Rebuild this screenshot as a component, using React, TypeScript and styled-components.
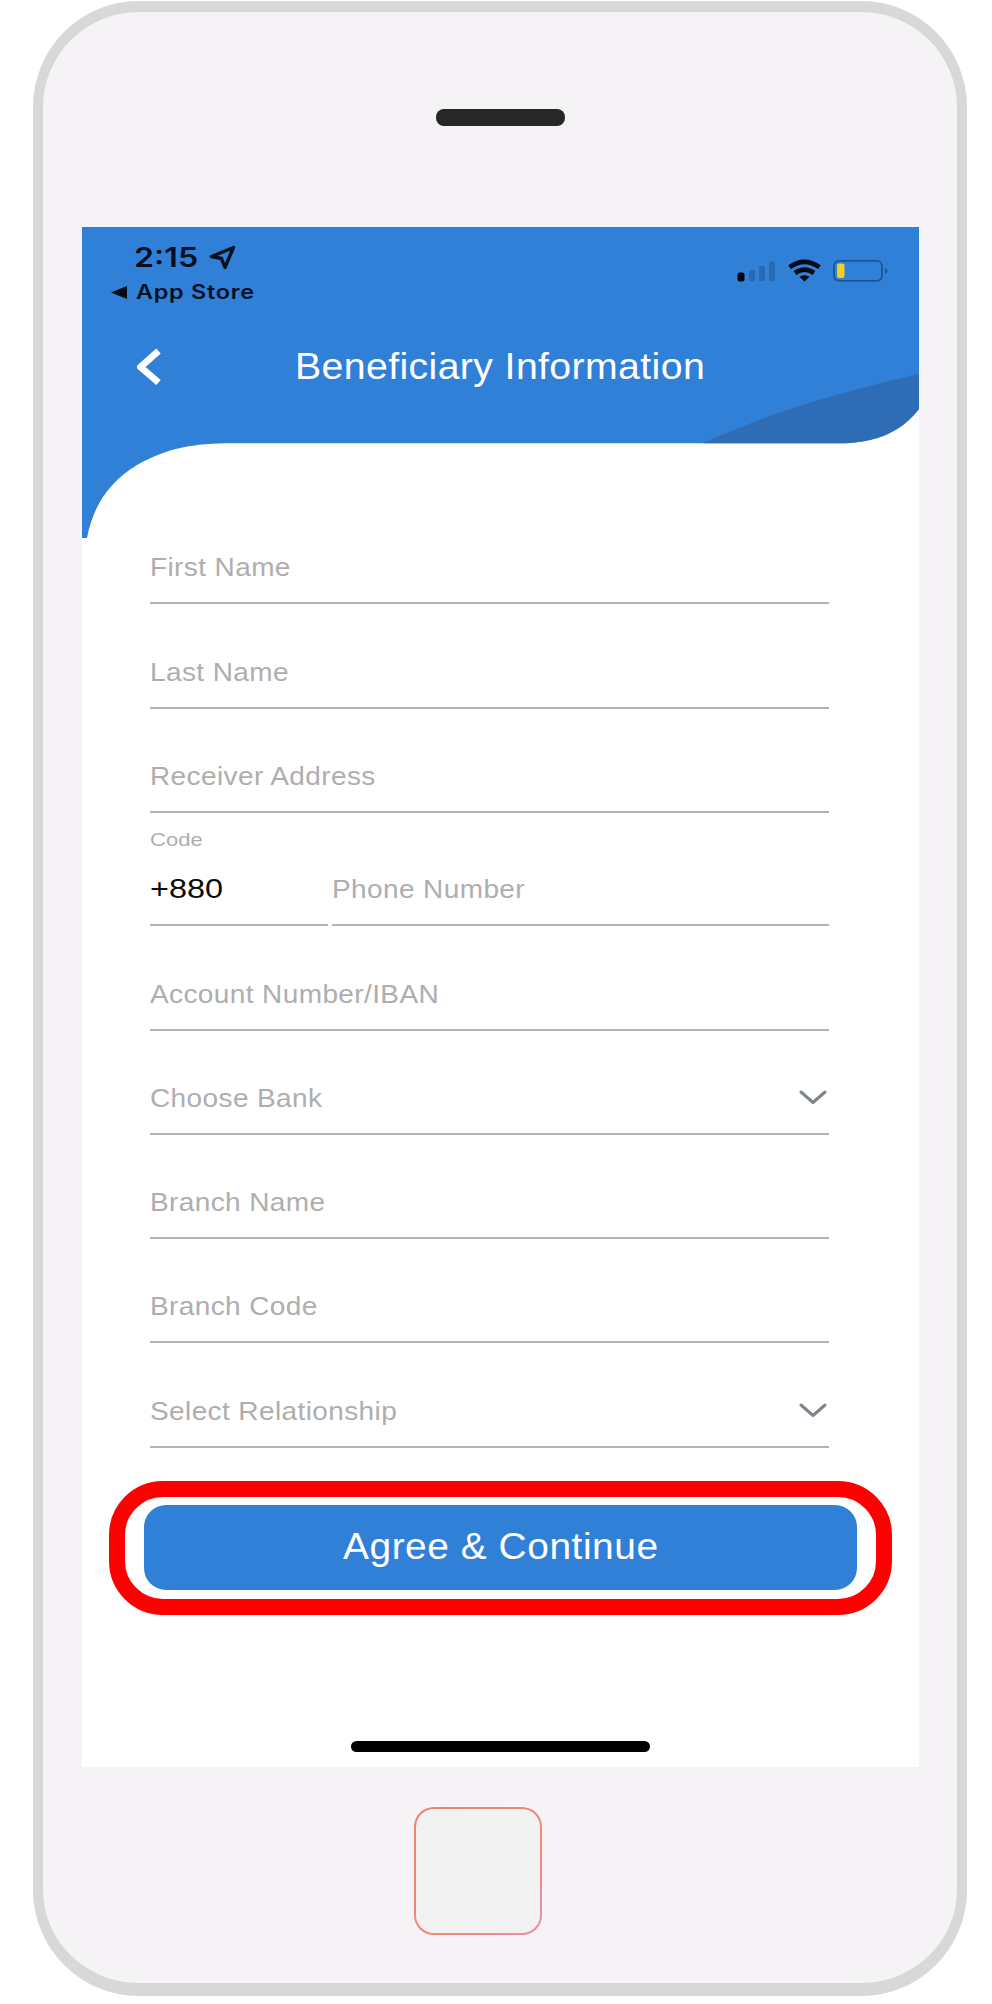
import React from 'react';
import styled, { createGlobalStyle } from 'styled-components';

const GlobalStyle = createGlobalStyle`
  * { box-sizing: border-box; }
  body { margin: 0; background: #fff; font-family: "Liberation Sans", Arial, sans-serif; }
  h1 { margin: 0; }
`;

const Page = styled.main`
  width: 992px;
  height: 2004px;
  padding: 1px 0 0 33px;
  overflow: hidden;
`;

const Phone = styled.div`
  width: 934px;
  height: 1995px;
  border: solid #d8d8d8;
  border-width: 11px 10px 13px;
  border-radius: 106px;
  background: #f5f3f5;
  display: flex;
  flex-direction: column;
`;

const Speaker = styled.div`
  width: 129px;
  height: 17px;
  margin: 97px 0 0 393px;
  border-radius: 8px;
  background: #262827;
`;

const Screen = styled.section`
  width: 837px;
  height: 1540px;
  margin: 101px 0 0 39px;
  background: #fff;
  display: flex;
  flex-direction: column;
`;

const HomeButton = styled.div`
  width: 128px;
  height: 128px;
  margin: 40px 0 0 371px;
  border: 2px solid transparent;
  border-radius: 20px;
  background:
    linear-gradient(#f2f2f2, #f2f2f2) padding-box,
    linear-gradient(135deg, #e98570 0%, #f28a78 65%, #ee8ba0 85%) border-box;
`;

const Header = styled.header`
  position: relative;
  height: 311px;
  flex: none;
`;

const HeaderShape = styled.svg`
  position: absolute;
  inset: 0;
`;

const HeaderContent = styled.div`
  position: relative;
`;

const StatusBar = styled.div`
  display: flex;
  justify-content: space-between;
  height: 90px;
  padding: 14px 31px 0 29px;
`;

const Clock = styled.div`
  display: flex;
  align-items: center;
  height: 33px;
  padding-left: 23px;
  gap: 11px;
`;

const BackToApp = styled.div`
  display: flex;
  align-items: center;
  gap: 9px;
  height: 26px;
  margin-top: 5px;
`;

const StatusIcons = styled.div`
  display: flex;
  gap: 12px;
  padding-top: 18px;
`;

/* Wide-set text: the glyphs are stretched horizontally from the left edge. */
const Label = styled.span<{
  $size: number;
  $line: number;
  $stretch?: number;
  $spacing?: number;
  $color?: string;
  $weight?: number;
  $width?: number;
  $inter?: boolean;
}>`
  display: block;
  font-size: ${p => p.$size}px;
  line-height: ${p => p.$line}px;
  letter-spacing: ${p => p.$spacing ?? 0}px;
  font-weight: ${p => p.$weight ?? 400};
  color: ${p => p.$color ?? '#aeaeae'};
  width: ${p => (p.$width ? `${p.$width}px` : 'auto')};
  font-family: ${p => (p.$inter ? 'Inter, "Liberation Sans", sans-serif' : 'inherit')};
  white-space: nowrap;
  transform: scaleX(${p => p.$stretch ?? 1.155});
  transform-origin: left center;
`;

const TitleBar = styled.div`
  display: flex;
  align-items: center;
  height: 60px;
  margin-top: 20px;
  padding-left: 53px;
  gap: 128px;
`;

const Form = styled.form`
  width: 679px;
  margin: -38px 0 0 68px;
`;

const Field = styled.div<{ $height?: number; $width?: number }>`
  display: flex;
  align-items: flex-end;
  justify-content: space-between;
  width: ${p => (p.$width ? `${p.$width}px` : '100%')};
  height: ${p => p.$height ?? 104.3}px;
  padding-bottom: 21px;
  border-bottom: 2px solid #b3b3b3;
`;

const PhoneRow = styled.div`
  display: flex;
  justify-content: space-between;
`;

const CodeStack = styled.div`
  display: flex;
  flex-direction: column;
  gap: 23px;
  margin-bottom: -1px;
`;

const ChevronDown = styled.svg`
  margin: 0 2px 3px 0;
`;

const Highlight = styled.div`
  width: 783px;
  height: 134px;
  margin: 33px 0 0 27px;
  flex: none;
  padding: 8px 19px 0 19px;
  border: solid #ff0000;
  border-width: 16px;
  border-radius: 54px;
`;

const Submit = styled.button`
  display: flex;
  align-items: center;
  width: 713px;
  height: 85px;
  padding: 0 0 0 199px;
  border: 0;
  border-radius: 22px;
  background: #3180d8;
  font-family: inherit;
`;

const HomeIndicator = styled.div`
  width: 299px;
  height: 11px;
  margin: 126px 0 0 269px;
  border-radius: 6px;
  background: #000;
`;

const rowsBefore = ['First Name', 'Last Name', 'Receiver Address'];
const rowsAfter = [
  { text: 'Account Number/IBAN' },
  { text: 'Choose Bank', select: true },
  { text: 'Branch Name' },
  { text: 'Branch Code' },
  { text: 'Select Relationship', select: true },
];

function FieldLabel({ children }: { children: React.ReactNode }) {
  return <Label $size={25} $line={28} $stretch={1.12} $spacing={0.35}>{children}</Label>;
}

function Status() {
  return (
    <StatusBar>
      <div>
        <Clock>
          <Label $size={27.5} $line={33} $weight={600} $color="#04101f" $width={64} $stretch={1.17} $inter>2:15</Label>
          <svg width="27" height="25" viewBox="0 0 27 25">
            <path d="M24.5 2.5 L2.5 11.5 L12.5 13.5 L16 22.5 Z" fill="none" stroke="#04101f" strokeWidth="3.4" strokeLinejoin="round" />
          </svg>
        </Clock>
        <BackToApp>
          <svg width="16" height="13" viewBox="0 0 16 13"><path d="M0 6.5 L16 0 V13 Z" fill="#020a14" /></svg>
          <Label $size={19.5} $line={26} $weight={600} $color="#04101f" $stretch={1.2} $spacing={0.6} $inter>App Store</Label>
        </BackToApp>
      </div>
      <StatusIcons>
        <svg width="39" height="23" viewBox="0 0 39 23">
          <rect x="0.5" y="13.5" width="7" height="9" rx="2" fill="#000814" />
          <rect x="12" y="11" width="6" height="11" rx="1.5" fill="#2769b3" />
          <rect x="22" y="7" width="6" height="15" rx="1.5" fill="#2769b3" />
          <rect x="32" y="2.5" width="6" height="19.5" rx="1.5" fill="#2769b3" />
        </svg>
        <svg width="33" height="23" viewBox="0 0 33 23" fill="none" stroke="#000814" strokeWidth="4.6">
          <path d="M1.6 8.2 Q16.5 -2.4 31.4 8.2" />
          <path d="M7 14 Q16.5 7.4 26 14" />
          <path d="M11.5 17.8 Q16.5 14.6 21.5 17.8 L16.5 22.5 Z" fill="#000814" stroke="none" />
        </svg>
        <svg width="55" height="23" viewBox="0 0 55 23">
          <rect x="1" y="1.8" width="48" height="20" rx="5" fill="none" stroke="#1d5596" strokeWidth="1.8" />
          <rect x="4" y="4.5" width="7.5" height="14.5" rx="2" fill="#f5cf20" />
          <path d="M52 9 Q54.5 9.5 54.5 12 Q54.5 14 52 14.5 Z" fill="#1d5596" />
        </svg>
      </StatusIcons>
    </StatusBar>
  );
}

export default function App() {
  return (
    <>
      <GlobalStyle />
      <Page>
        <Phone>
          <Speaker />
          <Screen>
            <Header>
              <HeaderShape width="837" height="311" viewBox="0 0 837 311">
                <path
                  d="M0 0 H837 V182 C820 204 795 216.3 757 216.3 H150 C112 216.3 85 221 55 238 C27 255 11 279 5 311 H0 Z"
                  fill="#3180d8"
                />
                <path d="M621 216.3 C680 189 745 168 837 147 V182 C820 204 795 216.3 757 216.3 Z" fill="#2e6db5" />
              </HeaderShape>
              <HeaderContent>
                <Status />
                <TitleBar>
                  <svg width="32" height="42" viewBox="0 0 32 42">
                    <path d="M23.5 5 L5.5 21 L23.5 36.5" fill="none" stroke="#fff" strokeWidth="6.8" strokeLinecap="butt" strokeLinejoin="round" />
                  </svg>
                  <Label as="h1" $size={36} $line={42} $color="#fff" $stretch={1.09} $spacing={0.35}>Beneficiary Information</Label>
                </TitleBar>
              </HeaderContent>
            </Header>
            <Form>
              {rowsBefore.map(text => (
                <Field key={text}><FieldLabel>{text}</FieldLabel></Field>
              ))}
              <PhoneRow>
                <Field $width={178} $height={113.4}>
                  <CodeStack>
                    <Label $size={19} $line={22} $stretch={1.16}>Code</Label>
                    <Label $size={27.5} $line={30} $stretch={1.18} $color="#0a0a0a">+880</Label>
                  </CodeStack>
                </Field>
                <Field $width={497} $height={113.4}><FieldLabel>Phone Number</FieldLabel></Field>
              </PhoneRow>
              {rowsAfter.map(({ text, select }) => (
                <Field key={text}>
                  <FieldLabel>{text}</FieldLabel>
                  {select && (
                    <ChevronDown width="28" height="22" viewBox="0 0 28 22">
                      <path d="M2 5 L14 15.5 L26 5" fill="none" stroke="#7d848d" strokeWidth="3" strokeLinecap="round" strokeLinejoin="round" />
                    </ChevronDown>
                  )}
                </Field>
              ))}
            </Form>
            <Highlight>
              <Submit type="button">
                <Label $size={36} $line={42} $color="#fff" $stretch={1.08} $spacing={0.5}>Agree &amp; Continue</Label>
              </Submit>
            </Highlight>
            <HomeIndicator />
          </Screen>
          <HomeButton />
        </Phone>
      </Page>
    </>
  );
}
